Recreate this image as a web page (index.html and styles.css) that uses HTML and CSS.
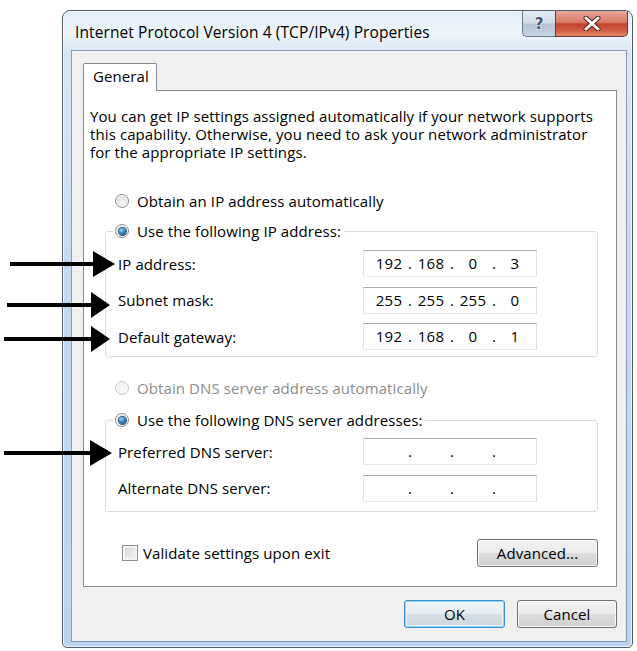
FILE: index.html
```html
<!DOCTYPE html>
<html lang="en">
<head>
<meta charset="utf-8">
<title>Internet Protocol Version 4 (TCP/IPv4) Properties</title>
<link rel="stylesheet" href="styles.css">
</head>
<body>
<div class="window">
  <div class="titlebar">
    <div class="title">Internet Protocol Version 4 (TCP/IPv4) Properties</div>
    <div class="caption-buttons">
      <div class="cap-btn help">?</div>
      <div class="cap-btn close">
        <svg width="20" height="15" viewBox="0 0 20 15">
          <path d="M4 2 L16 13 M16 2 L4 13" stroke="#5a1f18" stroke-width="5" stroke-linecap="round"/>
          <path d="M4 2 L16 13 M16 2 L4 13" stroke="#ffffff" stroke-width="3" stroke-linecap="round"/>
        </svg>
      </div>
    </div>
  </div>
  <div class="client">
    <div class="tabs"><div class="tab">General</div></div>
    <div class="panel">
      <p class="intro">You can get IP settings assigned automatically if your network supports<br>this capability. Otherwise, you need to ask your network administrator<br>for the appropriate IP settings.</p>

      <div class="option first"><span class="radio"></span>Obtain an IP address automatically</div>

      <fieldset class="group ip-group">
        <legend class="option"><span class="radio checked"></span>Use the following IP address:</legend>
        <div class="field-grid">
          <span class="label">IP address:</span>
          <div class="ipbox"><span>192</span><i>.</i><span>168</span><i>.</i><span>0</span><i>.</i><span>3</span></div>
          <span class="label">Subnet mask:</span>
          <div class="ipbox"><span>255</span><i>.</i><span>255</span><i>.</i><span>255</span><i>.</i><span>0</span></div>
          <span class="label">Default gateway:</span>
          <div class="ipbox"><span>192</span><i>.</i><span>168</span><i>.</i><span>0</span><i>.</i><span>1</span></div>
        </div>
      </fieldset>

      <div class="option dns-auto disabled"><span class="radio disabled"></span>Obtain DNS server address automatically</div>

      <fieldset class="group dns-group">
        <legend class="option"><span class="radio checked"></span>Use the following DNS server addresses:</legend>
        <div class="field-grid">
          <span class="label">Preferred DNS server:</span>
          <div class="ipbox"><span></span><i>.</i><span></span><i>.</i><span></span><i>.</i><span></span></div>
          <span class="label">Alternate DNS server:</span>
          <div class="ipbox"><span></span><i>.</i><span></span><i>.</i><span></span><i>.</i><span></span></div>
        </div>
      </fieldset>

      <div class="bottom-row">
        <div class="check-row"><span class="checkbox"></span>Validate settings upon exit</div>
        <button class="btn advanced">Advanced...</button>
      </div>
    </div>
    <div class="dialog-buttons">
      <button class="btn default ok">OK</button>
      <button class="btn cancel">Cancel</button>
    </div>
  </div>
</div>

<svg class="arrows" width="637" height="651" viewBox="0 0 637 651">
  <rect x="10" y="262" width="86" height="4" fill="#000"/>
  <polygon points="93,251 115,264 93,277" fill="#000"/>
  <rect x="7" y="303" width="87" height="4" fill="#000"/>
  <polygon points="91,292 110,305 91,318" fill="#000"/>
  <rect x="4" y="337" width="90" height="4" fill="#000"/>
  <polygon points="91,326 110,339 91,352" fill="#000"/>
  <rect x="4" y="451" width="88" height="4" fill="#000"/>
  <polygon points="90,440 112,453 90,466" fill="#000"/>
</svg>
</body>
</html>
```

FILE: styles.css
```css
html, body {
  margin: 0;
  padding: 0;
}
body {
  position: relative;
  width: 637px;
  height: 651px;
  overflow: hidden;
  background: #ffffff;
  font-family: "Open Sans", "Noto Sans", "DejaVu Sans", sans-serif;
  font-size: 15px;
  letter-spacing: 0.1px;
  color: #000;
}

.window {
  box-sizing: border-box;
  margin: 10px 0 0 62px;
  width: 571px;
  height: 638px;
  border: 1px solid #4f5d6e;
  border-radius: 8px 8px 5px 5px;
  padding: 0 5px 5px 8px;
  display: flex;
  flex-direction: column;
  background: linear-gradient(180deg, #e2ecf8 0px, #eef4fb 24px, #d7e6f6 42px, #c4daf1 260px, #bad4ef 100%);
  box-shadow: inset 0 0 0 1px rgba(255,255,255,0.75);
}

.titlebar {
  height: 39px;
  display: flex;
  justify-content: space-between;
  align-items: flex-start;
}
.title {
  margin: 12px 0 0 4px;
  line-height: 18px;
  font-size: 15.5px;
  color: #000;
}
.caption-buttons {
  display: flex;
  margin-right: -1px;
}
.cap-btn {
  box-sizing: border-box;
  height: 26px;
  display: flex;
  align-items: center;
  justify-content: center;
  border: 1px solid #6b7b8e;
  border-top: none;
}
.help {
  width: 33px;
  border-right: none;
  border-radius: 0 0 0 5px;
  background: linear-gradient(180deg, #e3ebf4 0%, #cfdbe8 48%, #b4c4d6 52%, #c6d4e4 100%);
  font-family: "DejaVu Sans", sans-serif;
  font-weight: bold;
  font-size: 15px;
  color: #4a5563;
  text-shadow: 0 0 2px #ffffff, 0 0 1px #ffffff;
  letter-spacing: 0;
}
.close {
  width: 73px;
  border-color: #6e3a33;
  border-radius: 0 0 5px 0;
  background: linear-gradient(180deg, #e9a797 0%, #d97a66 45%, #c4432c 52%, #d0614a 80%, #e08a6c 100%);
}

.client {
  flex: 1;
  border: 1px solid #8c9db2;
  background: #f0f0f0;
  padding: 12px 9px 0 11px;
  display: flex;
  flex-direction: column;
}

.tabs {
  display: flex;
}
.tab {
  position: relative;
  z-index: 1;
  box-sizing: border-box;
  width: 74px;
  height: 28px;
  margin-bottom: -1px;
  padding: 3px 0 0 9px;
  line-height: 18px;
  border: 1px solid #898c95;
  border-bottom: none;
  border-radius: 2px 2px 0 0;
  background: #ffffff;
}

.panel {
  border: 1px solid #898c95;
  background: #ffffff;
  padding: 16px 0 19px 6px;
}

.intro {
  margin: 0;
  line-height: 18px;
}

.option {
  display: flex;
  align-items: center;
  height: 18px;
  line-height: 18px;
  white-space: nowrap;
}
.option.first {
  margin: 31px 0 0 25px;
}
.option.dns-auto {
  margin: 22px 0 0 25px;
}
.option.disabled {
  color: #8d8d8d;
}

.radio {
  box-sizing: border-box;
  width: 14px;
  height: 14px;
  margin-right: 8px;
  border-radius: 50%;
  border: 1px solid #8c8e90;
  background: radial-gradient(circle at 60% 65%, #f6f6f6 0%, #e2e3e4 55%, #c9cacb 100%);
  box-shadow: inset 0 0 0 1px #fbfbfb;
  display: flex;
  align-items: center;
  justify-content: center;
  flex: none;
}
.radio.checked::after {
  content: "";
  width: 7px;
  height: 7px;
  border-radius: 50%;
  background: radial-gradient(circle at 35% 30%, #a6dcf7 0%, #3f8fc4 40%, #124c7c 85%);
  box-shadow: 0 0 0 1px #2a5a82;
}
.radio.disabled {
  border-color: #c4c6c8;
  background: radial-gradient(circle at 60% 65%, #fafafa 0%, #eeeeee 60%, #e2e2e2 100%);
}

.group {
  margin: 12px 18px 0 15px;
  border: 1px solid #d5dfe5;
  border-radius: 3px;
  padding: 10px 0 6px 12px;
  min-width: 0;
}
.group legend {
  margin-left: -5px;
  padding: 0 3px 0 2px;
}
.dns-group {
  margin-top: 14px;
  padding-top: 9px;
  padding-bottom: 9px;
}

.field-grid {
  display: grid;
  grid-template-columns: 245px 174px;
  row-gap: 9.5px;
  align-items: center;
}
.label {
  line-height: 18px;
}

.ipbox {
  box-sizing: border-box;
  height: 27px;
  border: 1px solid;
  border-color: #abadb3 #dbdfe6 #e3e9ef #e2e3ea;
  background: #ffffff;
  padding-left: 10px;
  display: grid;
  grid-template-columns: 30px 12px 30px 12px 30px 12px 30px;
  align-items: center;
  line-height: 25px;
  letter-spacing: 0.3px;
}
.ipbox span,
.ipbox i {
  font-style: normal;
  text-align: center;
}

.bottom-row {
  margin: 27px 18px 0 32px;
  display: flex;
  justify-content: space-between;
  align-items: center;
}
.check-row {
  display: flex;
  align-items: center;
  line-height: 18px;
}
.checkbox {
  box-sizing: border-box;
  width: 16px;
  height: 16px;
  margin-right: 5px;
  border: 1px solid #8e8f8f;
  background: linear-gradient(135deg, #cfd2d6 0%, #e4e5e7 50%, #f7f7f7 100%);
  box-shadow: inset 0 0 0 2px #f4f4f4;
}

.btn {
  box-sizing: border-box;
  height: 28px;
  border: 1px solid #707070;
  border-radius: 3px;
  background: linear-gradient(180deg, #f2f2f2 0%, #ebebeb 50%, #dddddd 51%, #cfcfcf 100%);
  box-shadow: inset 0 0 0 1px rgba(255,255,255,0.8);
  font-family: inherit;
  font-size: 15px;
  letter-spacing: 0.1px;
  color: #000;
  padding: 0;
  line-height: 26px;
}
.advanced {
  width: 121px;
}
.dialog-buttons {
  margin-top: 13px;
  display: flex;
  justify-content: flex-end;
  gap: 12px;
}
.ok {
  width: 101px;
}
.cancel {
  width: 100px;
}
.btn.default {
  border-color: #3c8fcd;
  box-shadow: inset 0 0 0 1px #8fd6f8, inset 0 0 0 2px rgba(255,255,255,0.6);
  background: linear-gradient(180deg, #f0f4f7 0%, #e6ecf0 50%, #d6dfe5 51%, #cdd8de 100%);
}

.arrows {
  position: absolute;
  left: 0;
  top: 0;
  pointer-events: none;
}
```
